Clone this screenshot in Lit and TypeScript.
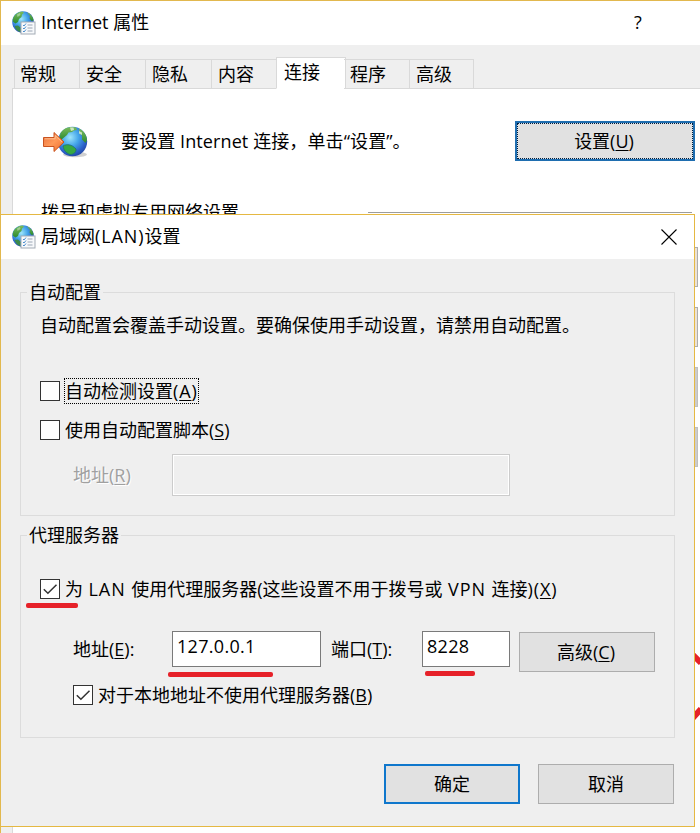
import { LitElement, html, css, svg, nothing } from "lit";
import { customElement, property } from "lit/decorators.js";
import { classMap } from "lit/directives/class-map.js";

const globeDefs = svg`
  <defs>
    <radialGradient id="sea" cx="0.42" cy="0.36" r="0.72">
      <stop offset="0" stop-color="#9fe6fa"></stop>
      <stop offset="0.4" stop-color="#45a6ea"></stop>
      <stop offset="0.75" stop-color="#2a5fc8"></stop>
      <stop offset="1" stop-color="#203f98"></stop>
    </radialGradient>
    <linearGradient id="land" x1="0" y1="0" x2="0" y2="1">
      <stop offset="0" stop-color="#7cbc5c"></stop>
      <stop offset="1" stop-color="#2a8a30"></stop>
    </linearGradient>
    <linearGradient id="arrow" x1="0" y1="0" x2="1" y2="1">
      <stop offset="0" stop-color="#e8703c"></stop>
      <stop offset="0.5" stop-color="#ff9a5a"></stop>
      <stop offset="1" stop-color="#ee6a28"></stop>
    </linearGradient>
  </defs>`;

@customElement("options-icon")
class OptionsIcon extends LitElement {
  static styles = css`
    :host { display: block; width: 24px; height: 24px; }
    svg { display: block; }
  `;
  render() {
    return html`<svg width="24" height="24" viewBox="0 0 24 24">
      ${globeDefs}
      <circle cx="11" cy="11" r="10.8" fill="url(#sea)"></circle>
      <path d="M3.5 3.6 C6 1.2 8 .6 10.5 .4 L12 1.8 L10 3.6 L9.5 6 L7 8 L6 11 L3.5 12.5 L.8 10.5 C.5 8 1.6 5.4 3.5 3.6Z" fill="url(#land)"></path>
      <path d="M15 1.2 C18.5 2.6 21 5.5 21.6 9.5 L19.5 10 L17.5 7.5 L18 5Z" fill="url(#land)"></path>
      <path d="M2.5 15 L6 14.5 L9 17 L8.500 21.200 C5.500 20.500 3.300 17.800 2.500 15Z" fill="#3c8a4a"></path>
      <path d="M5 3.500 L8 2 L8.500 4 L5.500 6Z" fill="#d5ecd8" opacity=".5"></path>
      <rect x="9" y="11" width="14" height="12" fill="#f7f9fb" stroke="#a3abb5"></rect>
      <path d="M15.500 14h5M15.500 17h5M15.500 20h5" stroke="#9aa5b4"></path>
      <path d="M11 14l1 1 2-2.500M11 17l1 1 2-2.500M11 20l1 1 2-2.500" fill="none" stroke="#4d8fce"></path>
    </svg>`;
  }
}

@customElement("connect-icon")
class ConnectIcon extends LitElement {
  static styles = css`
    :host { display: block; width: 46px; height: 32px; }
    svg { display: block; }
  `;
  render() {
    return html`<svg width="46" height="32" viewBox="0 0 46 32">
      ${globeDefs}
      <ellipse cx="33" cy="28.500" rx="12" ry="2.800" fill="#8a8a8a" opacity=".4"></ellipse>
      <circle cx="30.500" cy="15.500" r="14.700" fill="url(#sea)"></circle>
      <path d="M18.500 7 C21 3 25 1 29 .9 L34 1.500 L35 4 L32 4.500 L30 6 L26.500 6.500 L25 9 L22 11.500 L19 14 L17.500 12Z" fill="url(#land)"></path>
      <path d="M37 2.500 C41 4.500 44.500 8 45 14 L43.500 17 L40 13.500 L40 9.500 L37.500 7.500Z" fill="url(#land)"></path>
      <path d="M21 20 C25 17.500 30 18.500 34 23 C34.500 26 32 28.500 28 28.500 C23.500 27 21.500 23.500 21 20Z" fill="#36a843" stroke="#1d6f75" stroke-width=".8"></path>
      <path d="M28 1.500 l3.500 0 .5 2.500 -3 1Z M37 5l3 1.500 0 2.500 -3 -1.500Z" fill="#e2f2d8" opacity=".8"></path>
      <path d="M1.500 11.500 H12 V6.500 L22 16 L12 25.500 V20.500 H1.500Z" fill="url(#arrow)" stroke="#c9531f" stroke-linejoin="round"></path>
      <path d="M2.700 12.800 H13.200 V9.500 L20 16" fill="none" stroke="#ffc9a0" opacity=".8"></path>
    </svg>`;
  }
}

@customElement("check-option")
class CheckOption extends LitElement {
  @property({ type: Boolean }) checked = false;
  @property({ type: Boolean }) focused = false;
  static styles = css`
    :host { display: flex; align-items: center; height: 26px; }
    .box { box-sizing: border-box; width: 20px; height: 20px; border: 1px solid #333; background: #fff; margin-right: 4px; }
    .tick { display: block; width: 18px; height: 18px; }
    .label { box-sizing: border-box; height: 26px; line-height: 24px; border: 1px dotted transparent; white-space: nowrap; }
    .focused { border-color: #000; }
  `;
  render() {
    return html`
      <div class="box">
        ${this.checked
          ? html`<svg class="tick" viewBox="0 0 18 18"><path d="M2.800 9.300 L6.900 13.300 L15.500 4.700" fill="none" stroke="#333" stroke-width="1.500"></path></svg>`
          : nothing}
      </div>
      <div class=${classMap({ label: true, focused: this.focused })}><slot></slot></div>
    `;
  }
}

@customElement("app-root")
class AppRoot extends LitElement {
  static styles = css`
    :host {
      display: block; position: relative; box-sizing: border-box; width: 700px; height: 833px; overflow: hidden;
      font-family: "Open Sans", "Noto Sans CJK SC", sans-serif; font-size: 18px; line-height: 24px; color: #000;
      background: #efefef; border: solid #e2b84e; border-width: 1px 0 0 1px; white-space: nowrap;
    }
    u { text-decoration-thickness: 1px; text-underline-offset: 2px; }
    .wide { letter-spacing: .9px; }
    .titlebar { display: flex; align-items: center; height: 44px; background: #fff; box-sizing: border-box; padding-left: 11px; }
    .titlebar .name { margin: 0 0 2px 5px; flex: 1; }
    .help { width: 62px; text-align: center; margin: 0 31px 2px 0; }
    .close { margin-right: 17px; display: block; }
    .tabs { display: flex; align-items: flex-end; height: 32px; margin: 12px 0 0 13px; position: relative; }
    .tab { box-sizing: border-box; width: 66px; height: 30px; border: 1px solid #d9d9d9; border-left-width: 0; padding-left: 6px; line-height: 28px; }
    .tab:first-child { border-left-width: 1px; padding-left: 5px; }
    .tab.active { width: 70px; height: 32px; background: #fff; border-left-width: 1px; border-bottom-color: #fff; margin: 0 -2px 0 -2px; padding-left: 7px; line-height: 28px; }
    .tab.last { width: 64px; }
    .page { box-sizing: border-box; height: 745px; margin: -1px 0 0 11px; background: #fff; border: solid #d9d9d9; border-width: 1px 0 0 1px; padding-top: 32px; }
    .setup { display: flex; align-items: center; height: 40px; padding-left: 29px; }
    .setup connect-icon { margin-top: 2px; }
    .setup .hint { margin-left: 33px; width: 394px; letter-spacing: .1px; }
    .button { box-sizing: border-box; display: flex; align-items: center; justify-content: center; width: 136px; height: 40px; border: 1px solid #adadad; background: #e1e1e1; }
    .button.primary { border: 2px solid #0f77cc; }
    .button.setting { width: 180px; border: 2px solid #1f6eb0; }
    .button.setting .focus { box-sizing: border-box; width: 176px; height: 36px; border: 1px dotted #001c3c; line-height: 34px; text-align: center; padding-right: 2px; }
    .dialup { display: flex; align-items: flex-start; height: 24px; margin: 39px 0 0 28px; }
    .dialup .name { width: 327px; }
    .dialup .list { width: 324px; height: 1px; background: #9c9c9c; margin-top: 12px; }
    .side { display: flex; flex-direction: column; gap: 20px; width: 60px; margin: 23px 0 0 625px; }
    .side .item { box-sizing: border-box; height: 40px; border: 1px solid #adadad; background: #ece2d4; }
    .side .item.off { border-color: #bfbfbf; background: #cccccc; }
    .ring { position: absolute; left: 690px; top: 648px; }
    .dialog { position: absolute; left: -1px; top: 213px; box-sizing: border-box; width: 695px; height: 613px; border: 1px solid #e5b842; background: #efefef; }
    .group { box-sizing: border-box; width: 655px; margin-left: 19px; border: 1px solid #dcdcdc; }
    .auto { margin-top: 33px; height: 224px; }
    .proxy { margin-top: 19px; height: 203px; }
    .legend { width: max-content; height: 20px; line-height: 20px; margin: -11px 0 0 6px; padding: 0 2px; background: #efefef; }
    .para { margin: 11px 0 0 19px; }
    .detect { margin: 41px 0 0 19px; }
    .script { margin: 13px 0 0 19px; }
    .address { display: flex; align-items: center; margin: 11px 0 0 52px; height: 42px; }
    .address .cap { width: 99px; color: #a0a0a0; text-shadow: 1px 1px 0 #fff; }
    .field { box-sizing: border-box; border: 1px solid #7a7a7a; background: #fff; height: 36px; line-height: 29px; padding-left: 4px; letter-spacing: .3px; }
    .field.disabled { width: 338px; height: 42px; border-color: #ccc; background: #efefef; box-shadow: inset 0 0 0 1px #fff; }
    .use { margin: 31px 0 0 19px; }
    .server { display: flex; align-items: flex-start; margin: 29px 0 0 52px; height: 41px; }
    .server .cap { width: 99px; line-height: 37px; }
    .server .port { width: 91px; margin-left: 10px; line-height: 37px; }
    .field.host { width: 149px; }
    .field.num { width: 88px; }
    .server .button { margin: 1px 0 0 9px; padding-right: 2px; }
    .bypass { margin: 10px 0 0 52px; }
    .actions { display: flex; justify-content: flex-end; gap: 18px; margin: 26px 20px 0 0; }
    .mark { position: absolute; height: 5px; border-radius: 2px; background: #e62129; }
    .m1 { left: 25px; top: 388px; width: 52px; }
    .m2 { left: 167px; top: 457px; width: 105px; }
    .m3 { left: 424px; top: 456px; width: 50px; }
  `;

  private tabs = ["常规", "安全", "隐私", "内容", "连接", "程序", "高级"];

  render() {
    return html`
      <div class="titlebar">
        <options-icon></options-icon>
        <span class="name">Internet 属性</span>
        <span class="help">?</span>
      </div>
      <div class="tabs">
        ${this.tabs.map((t, i) => html`<div class=${classMap({ tab: true, active: i === 4, last: i === 6 })}>${t}</div>`)}
      </div>
      <div class="page">
        <div class="setup">
          <connect-icon></connect-icon>
          <span class="hint">要设置 Internet 连接，单击“设置”。</span>
          <div class="button setting"><div class="focus">设置(<u>U</u>)</div></div>
        </div>
        <div class="dialup"><span class="name">拨号和虚拟专用网络设置</span><div class="list"></div></div>
        <div class="side">
          <div class="item"></div><div class="item"></div>
          <div class="item off"></div><div class="item off"></div>
        </div>
      </div>
      <svg class="ring" width="10" height="74" viewBox="0 0 10 74">
        <path d="M0 4 L10 14 M10 60 L0 71" stroke="#e62129" stroke-width="6" fill="none"></path>
      </svg>

      <div class="dialog">
        <div class="titlebar">
          <options-icon></options-icon>
          <span class="name">局域网<span class="wide">(LAN)</span>设置</span>
          <svg class="close" width="16" height="16" viewBox="0 0 16 16"><path d="M.5 .5 L15.500 15.500 M15.500 .5 L.5 15.500" stroke="#000" stroke-width="1.100"></path></svg>
        </div>
        <div class="group auto">
          <div class="legend">自动配置</div>
          <div class="para">自动配置会覆盖手动设置。要确保使用手动设置，请禁用自动配置。</div>
          <check-option class="detect" focused>自动检测设置<span class="wide">(<u>A</u>)</span></check-option>
          <check-option class="script">使用自动配置脚本(<u>S</u>)</check-option>
          <div class="address"><span class="cap">地址(<u>R</u>)</span><div class="field disabled"></div></div>
        </div>
        <div class="group proxy">
          <div class="legend">代理服务器</div>
          <check-option class="use" checked>为<span class="wide"> LAN </span>使用代理服务器(这些设置不用于拨号或<span class="wide"> VPN </span>连接<span class="wide">)(<u>X</u>)</span></check-option>
          <div class="server">
            <span class="cap">地址(<u>E</u>):</span>
            <div class="field host">127.0.0.1</div>
            <span class="port">端口(<u>T</u>):</span>
            <div class="field num">8228</div>
            <div class="button">高级(<u>C</u>)</div>
          </div>
          <check-option class="bypass" checked>对于本地地址不使用代理服务器(<u>B</u>)</check-option>
        </div>
        <div class="actions">
          <div class="button primary">确定</div>
          <div class="button">取消</div>
        </div>
        <div class="mark m1"></div>
        <div class="mark m2"></div>
        <div class="mark m3"></div>
      </div>
    `;
  }
}
